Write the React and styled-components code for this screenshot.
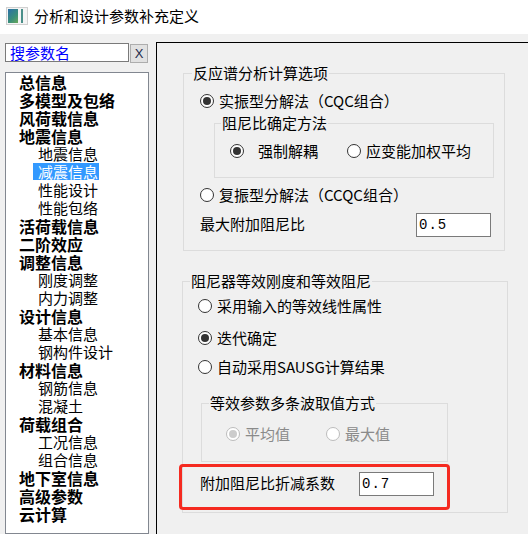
import styled, { createGlobalStyle } from "styled-components";

const GlobalStyle = createGlobalStyle`
  body {
    margin: 0;
    background: #f0f0f0;
    font-family: "Noto Sans CJK SC", "Noto Sans", sans-serif;
  }
`;

const tree = [
  { label: "总信息", top: true },
  { label: "多模型及包络", top: true },
  { label: "风荷载信息", top: true },
  { label: "地震信息", top: true },
  { label: "地震信息" },
  { label: "减震信息", selected: true },
  { label: "性能设计" },
  { label: "性能包络" },
  { label: "活荷载信息", top: true },
  { label: "二阶效应", top: true },
  { label: "调整信息", top: true },
  { label: "刚度调整" },
  { label: "内力调整" },
  { label: "设计信息", top: true },
  { label: "基本信息" },
  { label: "钢构件设计" },
  { label: "材料信息", top: true },
  { label: "钢筋信息" },
  { label: "混凝土" },
  { label: "荷载组合", top: true },
  { label: "工况信息" },
  { label: "组合信息" },
  { label: "地下室信息", top: true },
  { label: "高级参数", top: true },
  { label: "云计算", top: true },
];

const Radio = ({ checked, disabled, gap, children }) => (
  <RadioRow $disabled={disabled}>
    <Circle $checked={checked} $disabled={disabled} />
    <RadioText $gap={gap}>{children}</RadioText>
  </RadioRow>
);

const App = () => {
  return (
    <>
      <GlobalStyle />
      <Window>
        <TitleBar>
          <AppIcon>
            <span />
          </AppIcon>
          <Title>分析和设计参数补充定义</Title>
        </TitleBar>
        <Body>
          <LeftColumn>
            <SearchRow>
              <SearchBox>搜参数名</SearchBox>
              <ClearButton>X</ClearButton>
            </SearchRow>
            <Tree>
              {tree.map((item, i) => (
                <TreeItem key={i} $top={item.top}>
                  <TreeLabel $selected={item.selected}>{item.label}</TreeLabel>
                </TreeItem>
              ))}
            </Tree>
          </LeftColumn>
          <Panel>
            <Group $left={26} $width={322} $top={22}>
              <Legend $offset={8}>反应谱分析计算选项</Legend>
              <Content $pad="10px 10px 13px 16px">
                <Radio checked>实振型分解法（CQC组合）</Radio>
                <Group $left={14} $top={4}>
                  <Legend $offset={6}>阻尼比确定方法</Legend>
                  <Content $pad="10px 0 16px 15px">
                    <InlineRadios $gap={29}>
                      <Radio checked gap={14}>强制解耦</Radio>
                      <Radio>应变能加权平均</Radio>
                    </InlineRadios>
                  </Content>
                </Group>
                <Spacer $h={7} />
                <Radio>复振型分解法（CCQC组合）</Radio>
                <Spacer $h={8} />
                <FieldRow $labelWidth={216}>
                  <span>最大附加阻尼比</span>
                  <NumberBox>0.5</NumberBox>
                </FieldRow>
              </Content>
            </Group>

            <Group $left={25} $width={326} $top={22}>
              <Legend $offset={7}>阻尼器等效刚度和等效阻尼</Legend>
              <Content $pad="7px 10px 2px 15px">
                <Radio>采用输入的等效线性属性</Radio>
                <Spacer $h={12} />
                <Radio checked>迭代确定</Radio>
                <Spacer $h={9} />
                <Radio>自动采用SAUSG计算结果</Radio>
                <Group $left={3} $width={247} $top={18}>
                  <Legend $offset={7}>等效参数多条波取值方式</Legend>
                  <Content $pad="13px 0 17px 24px">
                    <InlineRadios $gap={36}>
                      <Radio checked disabled>平均值</Radio>
                      <Radio disabled>最大值</Radio>
                    </InlineRadios>
                  </Content>
                </Group>
                <Highlight>
                  <FieldRow $labelWidth={159}>
                    <span>附加阻尼比折减系数</span>
                    <NumberBox>0.7</NumberBox>
                  </FieldRow>
                </Highlight>
              </Content>
            </Group>
          </Panel>
        </Body>
      </Window>
    </>
  );
};

const Window = styled.div`
  width: 528px;
  height: 534px;
  overflow: hidden;
  display: flex;
  flex-direction: column;
  background: #f0f0f0;
`;

const TitleBar = styled.div`
  height: 34px;
  flex-shrink: 0;
  background: #ffffff;
  display: flex;
  align-items: center;
  padding-left: 6px;
  gap: 6px;
`;

const AppIcon = styled.div`
  width: 18px;
  height: 14px;
  border: 1px solid #d0d0d0;
  background: #f4f4f4;
  display: flex;
  align-items: stretch;
  padding: 1px;
  margin-top: -2px;

  & span {
    width: 10px;
    background: linear-gradient(135deg, #2b6fa8 0%, #3a8f7a 60%, #6aa85a 100%);
  }

  &::after {
    content: "";
    width: 2px;
    margin-left: 3px;
    background: #4a8f8a;
  }
`;

const Title = styled.div`
  font-size: 15px;
  line-height: 18px;
  color: #000;
  margin-top: -2px;
`;

const Body = styled.div`
  flex: 1;
  display: flex;
  align-items: stretch;
  padding-left: 5px;
`;

const LeftColumn = styled.div`
  width: 144px;
  display: flex;
  flex-direction: column;
  padding-top: 9px;
`;

const SearchRow = styled.div`
  display: flex;
  gap: 1px;
  height: 19px;
`;

const SearchBox = styled.div`
  width: 118px;
  height: 17px;
  border: 1px solid #7a7a7a;
  background: #fff;
  color: #0000ff;
  font-size: 15px;
  line-height: 17px;
  padding-left: 4px;
`;

const ClearButton = styled.div`
  width: 16px;
  height: 17px;
  margin-top: 1px;
  border: 1px solid #adadad;
  background: #e1e1e1;
  font-family: "Liberation Sans", sans-serif;
  font-size: 13px;
  line-height: 17px;
  text-align: center;
  color: #1c2a4a;
`;

const Tree = styled.div`
  margin-top: 10px;
  flex: 1;
  border: 1px solid #828790;
  background: #fff;
`;

const TreeItem = styled.div`
  height: 18px;
  line-height: 18px;
  padding-left: ${(p) => (p.$top ? "13px" : "32px")};
  font-size: ${(p) => (p.$top ? "16px" : "15px")};
  font-weight: ${(p) => (p.$top ? 700 : 400)};
  color: #000;
  white-space: nowrap;
`;

const TreeLabel = styled.span`
  display: inline-block;
  line-height: 17px;
  ${(p) =>
    p.$selected &&
    `
    background: #3399ff;
    color: #fff;
    margin-left: -5px;
    padding: 0 1px 0 5px;
  `}
`;

const Panel = styled.div`
  flex: 1;
  margin-left: 7px;
  margin-top: 8px;
  margin-right: -20px;
  margin-bottom: -20px;
  border: 1px solid #000;
  display: flex;
  flex-direction: column;
  align-items: flex-start;
`;

const Group = styled.fieldset`
  margin: ${(p) => p.$top}px 0 0 ${(p) => p.$left}px;
  width: ${(p) => (p.$width ? `${p.$width}px` : "auto")};
  align-self: ${(p) => (p.$width ? "flex-start" : "stretch")};
  padding: 0;
  border: 1px solid #dcdcdc;
  box-sizing: border-box;
  min-width: 0;
`;

const Legend = styled.legend`
  margin-left: ${(p) => p.$offset}px;
  padding: 0 1px;
  font-size: 15px;
  line-height: 16px;
  color: #000;
`;

const Content = styled.div`
  display: flex;
  flex-direction: column;
  padding: ${(p) => p.$pad};
`;

const Spacer = styled.div`
  height: ${(p) => p.$h}px;
  flex-shrink: 0;
`;

const RadioRow = styled.div`
  display: flex;
  align-items: center;
  height: 20px;
  font-size: 15px;
  color: ${(p) => (p.$disabled ? "#8a8a8a" : "#000")};
  white-space: nowrap;
`;

const Circle = styled.span`
  width: 12px;
  height: 12px;
  border-radius: 50%;
  border: 1px solid ${(p) => (p.$disabled ? "#bcbcbc" : "#333")};
  background: #fff;
  display: flex;
  align-items: center;
  justify-content: center;
  flex-shrink: 0;

  &::after {
    content: "";
    display: ${(p) => (p.$checked ? "block" : "none")};
    width: 8px;
    height: 8px;
    border-radius: 50%;
    background: ${(p) => (p.$disabled ? "#cccccc" : "#333")};
  }
`;

const RadioText = styled.span`
  margin-left: ${(p) => p.$gap ?? 5}px;
  line-height: 20px;
`;

const InlineRadios = styled.div`
  display: flex;
  gap: ${(p) => p.$gap}px;
`;

const FieldRow = styled.div`
  display: flex;
  align-items: center;
  height: 24px;
  font-size: 15px;
  color: #000;

  & > span {
    width: ${(p) => p.$labelWidth}px;
    flex-shrink: 0;
    margin-top: -4px;
  }
`;

const NumberBox = styled.div`
  width: 75px;
  height: 24px;
  border: 1px solid #7a7a7a;
  background: #fff;
  font-family: "Liberation Mono", monospace;
  font-size: 14px;
  letter-spacing: 1px;
  line-height: 22px;
  padding-left: 2px;
  box-sizing: border-box;
`;

const Highlight = styled.div`
  margin: 2px 0 0 -19px;
  width: 271px;
  height: 46px;
  box-sizing: border-box;
  border: 3px solid #f52a20;
  border-radius: 4px;
  padding: 5px 0 0 18px;
`;

export default App;
